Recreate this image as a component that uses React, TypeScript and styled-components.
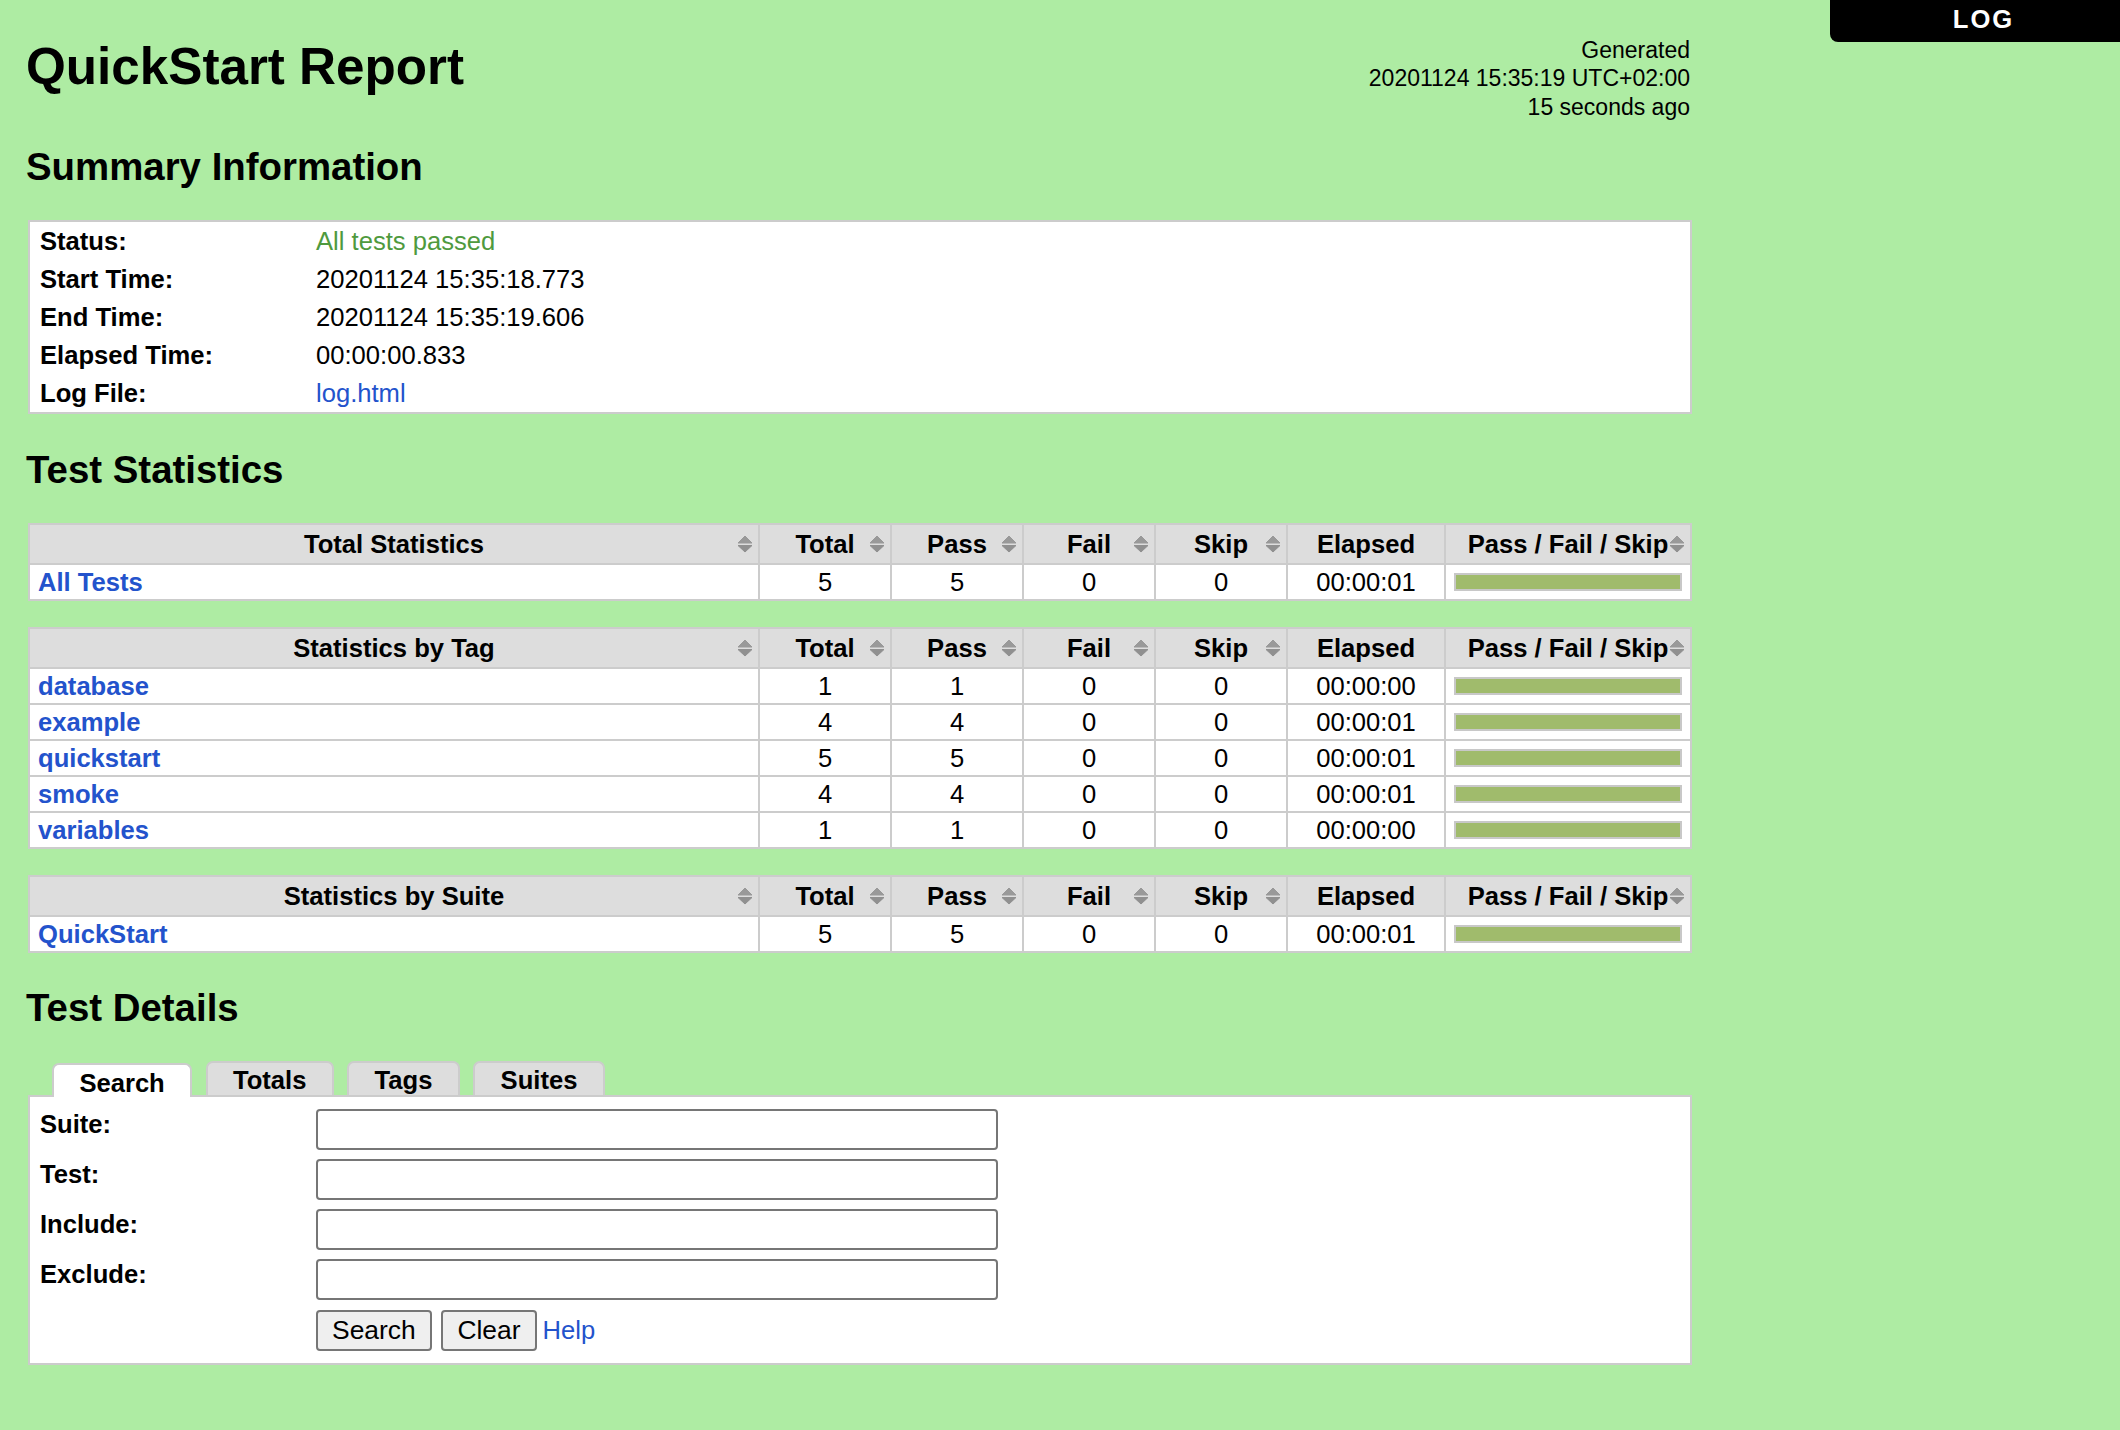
import React from "react";
import styled, { createGlobalStyle } from "styled-components";

const Global = createGlobalStyle`
  html, body { margin: 0; padding: 0; }
  body {
    background: #aeeca3;
    color: #000;
    font-family: "Liberation Sans", Arial, Helvetica, sans-serif;
    font-size: 25.6px;
  }
`;

const Page = styled.div`
  position: relative;
  box-sizing: border-box;
  width: 2120px;
  height: 1430px;
  overflow: hidden;
  padding: 36px 0 0 26px;
`;
const Content = styled.div`
  width: 1666px;
`;
const LogTab = styled.a`
  position: absolute;
  top: 0;
  right: 0;
  box-sizing: border-box;
  width: 290px;
  height: 42px;
  padding-left: 17px;
  background: #000;
  color: #fff;
  font-weight: bold;
  font-size: 25.6px;
  letter-spacing: 2px;
  line-height: 38px;
  text-align: center;
  text-decoration: none;
  border-bottom-left-radius: 8px;
`;
const Header = styled.header`
  display: flex;
  justify-content: space-between;
  align-items: flex-start;
  height: 108px;
`;
const Title = styled.h1`
  margin: 0;
  font-size: 51.2px;
  font-weight: bold;
  line-height: 61px;
  white-space: nowrap;
`;
const Generated = styled.div`
  font-size: 23px;
  line-height: 28.3px;
  text-align: right;
  padding-right: 2px;
`;
const Heading = styled.h2<{ $top: number; $bottom: number }>`
  margin: ${(p) => p.$top}px 0 ${(p) => p.$bottom}px;
  font-size: 38.4px;
  font-weight: bold;
  line-height: 46px;
`;
const Summary = styled.table`
  margin-left: 2px;
  width: 1664px;
  height: 194px;
  border: 2px solid #ccc;
  border-spacing: 0;
  background: #fff;
  table-layout: fixed;
`;
const LabelCell = styled.th`
  width: 276px;
  padding: 0 0 0 10px;
  box-sizing: content-box;
  font-weight: bold;
  text-align: left;
  vertical-align: middle;
  white-space: nowrap;
`;
const ValueCell = styled.td<{ $status?: boolean }>`
  padding: 0;
  color: ${(p) => (p.$status ? "#4f9a3e" : "#000")};
  vertical-align: middle;
`;
const Link = styled.a<{ $bold?: boolean }>`
  color: #2353cc;
  font-weight: ${(p) => (p.$bold ? "bold" : "normal")};
  text-decoration: none;
`;
const HelpLink = styled(Link)`
  margin-left: -1px;
`;
const StatsTable = styled.table`
  margin: 0 0 26px 2px;
  width: 1664px;
  border-collapse: collapse;
  table-layout: fixed;
  background: #fff;
  border: 2px solid #ccc;
`;
const HeadCell = styled.th<{ $w?: number }>`
  position: relative;
  box-sizing: border-box;
  height: 40px;
  padding: 0;
  background: #ddd;
  border: 2px solid #ccc;
  font-weight: bold;
  text-align: center;
  white-space: nowrap;
  vertical-align: middle;
  width: ${(p) => (p.$w ? `${p.$w}px` : "auto")};
`;
const SortIcon = styled.svg`
  position: absolute;
  top: 10px;
  right: 5px;
  width: 16px;
  height: 18px;
`;
const NameCell = styled.td`
  box-sizing: border-box;
  height: 36px;
  padding: 0 0 0 8px;
  border: 2px solid #ccc;
  text-align: left;
  vertical-align: middle;
`;
const NumCell = styled.td`
  box-sizing: border-box;
  height: 36px;
  padding: 0;
  border: 2px solid #ccc;
  text-align: center;
  vertical-align: middle;
`;
const GraphCell = styled.td`
  box-sizing: border-box;
  height: 36px;
  padding: 0 8px;
  border: 2px solid #ccc;
  vertical-align: middle;
`;
const Bar = styled.div`
  box-sizing: border-box;
  height: 18px;
  background: #a0bb6c;
  border: 2px solid #c8c8c8;
`;
const Tabs = styled.div`
  position: relative;
  display: flex;
  align-items: flex-end;
  gap: 13.4px;
  margin: 0 0 -2px 26px;
`;
const Tab = styled.div<{ $active?: boolean }>`
  position: relative;
  z-index: ${(p) => (p.$active ? 1 : 0)};
  box-sizing: border-box;
  height: ${(p) => (p.$active ? "34px" : "36px")};
  padding: 0 25.4px;
  background: ${(p) => (p.$active ? "#fff" : "#ddd")};
  border: 2px solid #ccc;
  border-bottom: ${(p) => (p.$active ? "0" : "2px solid #ccc")};
  border-radius: 7px 7px 0 0;
  font-weight: bold;
  line-height: ${(p) => (p.$active ? "36px" : "34px")};
  white-space: nowrap;
`;
const Panel = styled.div`
  box-sizing: border-box;
  margin-left: 2px;
  width: 1664px;
  height: 270px;
  padding: 12px 10px 0;
  background: #fff;
  border: 2px solid #ccc;
`;
const FormRow = styled.div`
  display: grid;
  grid-template-columns: 276px 682px;
  height: 50px;
`;
const FormLabel = styled.label`
  font-weight: bold;
  line-height: 30px;
`;
const Input = styled.input`
  box-sizing: border-box;
  width: 682px;
  height: 41px;
  margin: 0;
  background: #fff;
  border: 2px solid #767676;
  border-radius: 4px;
`;
const Actions = styled.div`
  display: flex;
  align-items: center;
  margin: 1px 0 0 276px;
`;
const Button = styled.button`
  box-sizing: border-box;
  height: 41px;
  margin: 0 7px 0 0;
  padding: 0 14.1px;
  background: #efefef;
  border: 2px solid #767676;
  border-radius: 4px;
  color: #000;
  font-family: inherit;
  font-size: 26.4px;
  line-height: 1;
  & + & {
    margin-left: 2.5px;
  }
`;

const Sort = () => (
  <SortIcon viewBox="0 0 16 18" aria-hidden="true">
    <path d="M8 1 L15 8 H1 Z" fill="#999" stroke="#999" strokeLinejoin="round" />
    <path d="M1 10.5 H15 L8 17 Z" fill="#909090" stroke="#909090" strokeLinejoin="round" />
  </SortIcon>
);

type Row = { name: string; total: number; pass: number; elapsed: string };

const StatBlock = ({ title, rows }: { title: string; rows: Row[] }) => (
  <StatsTable>
    <thead>
      <tr>
        <HeadCell>{title}<Sort /></HeadCell>
        <HeadCell $w={132}>Total<Sort /></HeadCell>
        <HeadCell $w={132}>Pass<Sort /></HeadCell>
        <HeadCell $w={132}>Fail<Sort /></HeadCell>
        <HeadCell $w={132}>Skip<Sort /></HeadCell>
        <HeadCell $w={158}>Elapsed</HeadCell>
        <HeadCell $w={246}>Pass / Fail / Skip<Sort /></HeadCell>
      </tr>
    </thead>
    <tbody>
      {rows.map((r) => (
        <tr key={r.name}>
          <NameCell><Link $bold href="#">{r.name}</Link></NameCell>
          <NumCell>{r.total}</NumCell>
          <NumCell>{r.pass}</NumCell>
          <NumCell>0</NumCell>
          <NumCell>0</NumCell>
          <NumCell>{r.elapsed}</NumCell>
          <GraphCell><Bar /></GraphCell>
        </tr>
      ))}
    </tbody>
  </StatsTable>
);

const summary: [string, React.ReactNode, boolean?][] = [
  ["Status:", "All tests passed", true],
  ["Start Time:", "20201124 15:35:18.773"],
  ["End Time:", "20201124 15:35:19.606"],
  ["Elapsed Time:", "00:00:00.833"],
  ["Log File:", <Link href="#">log.html</Link>],
];

export default function App() {
  return (
    <Page>
      <Global />
      <LogTab href="#">LOG</LogTab>
      <Content>
        <Header>
          <Title>QuickStart Report</Title>
          <Generated>
            Generated<br />
            20201124 15:35:19 UTC+02:00<br />
            15 seconds ago
          </Generated>
        </Header>
        <Heading $top={0} $bottom={30}>Summary Information</Heading>
        <Summary>
          <tbody>
            {summary.map(([k, v, s]) => (
              <tr key={k}>
                <LabelCell>{k}</LabelCell>
                <ValueCell $status={s}>{v}</ValueCell>
              </tr>
            ))}
          </tbody>
        </Summary>
        <Heading $top={33} $bottom={30}>Test Statistics</Heading>
        <StatBlock title="Total Statistics" rows={[{ name: "All Tests", total: 5, pass: 5, elapsed: "00:00:01" }]} />
        <StatBlock
          title="Statistics by Tag"
          rows={[
            { name: "database", total: 1, pass: 1, elapsed: "00:00:00" },
            { name: "example", total: 4, pass: 4, elapsed: "00:00:01" },
            { name: "quickstart", total: 5, pass: 5, elapsed: "00:00:01" },
            { name: "smoke", total: 4, pass: 4, elapsed: "00:00:01" },
            { name: "variables", total: 1, pass: 1, elapsed: "00:00:00" },
          ]}
        />
        <StatBlock title="Statistics by Suite" rows={[{ name: "QuickStart", total: 5, pass: 5, elapsed: "00:00:01" }]} />
        <Heading $top={32} $bottom={30}>Test Details</Heading>
        <Tabs>
          <Tab $active>Search</Tab>
          <Tab>Totals</Tab>
          <Tab>Tags</Tab>
          <Tab>Suites</Tab>
        </Tabs>
        <Panel>
          {["Suite:", "Test:", "Include:", "Exclude:"].map((l) => (
            <FormRow key={l}>
              <FormLabel>{l}</FormLabel>
              <Input type="text" />
            </FormRow>
          ))}
          <Actions>
            <Button>Search</Button>
            <Button>Clear</Button>
            <HelpLink href="#">Help</HelpLink>
          </Actions>
        </Panel>
      </Content>
    </Page>
  );
}
